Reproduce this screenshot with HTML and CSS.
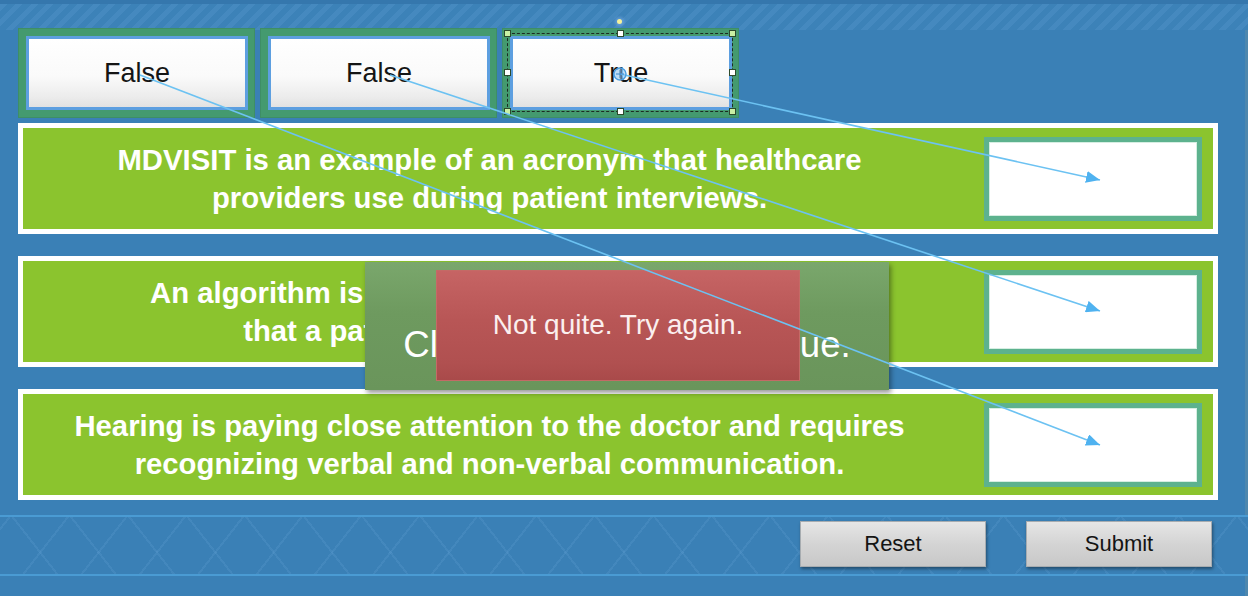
FILE: index.html
```html
<!DOCTYPE html>
<html lang="en">
<head>
<meta charset="utf-8">
<title>Drag and drop quiz</title>
<link rel="stylesheet" href="styles.css">
</head>
<body>
<div class="stage">
  <div class="tiles">
    <div class="tile"><div class="tile-face">False</div></div>
    <div class="tile"><div class="tile-face">False</div></div>
    <div class="tile tile-selected">
      <div class="tile-face">True</div>
      <div class="sel-box">
        <span class="handle h-tl corner"></span>
        <span class="handle h-tm"></span>
        <span class="handle h-tr corner"></span>
        <span class="handle h-ml"></span>
        <span class="handle h-mr"></span>
        <span class="handle h-bl corner"></span>
        <span class="handle h-bm"></span>
        <span class="handle h-br corner"></span>
      </div>
      <span class="rotate-dot"></span>
    </div>
  </div>

  <div class="rows">
    <div class="row">
      <p class="stmt">MDVISIT is an example of an acronym that healthcare<br>providers use during patient interviews.</p>
      <div class="drop"></div>
    </div>
    <div class="row">
      <p class="stmt">An algorithm is written guidance for all the steps<br>that a patient should follow closely.</p>
      <div class="drop"></div>
    </div>
    <div class="row">
      <p class="stmt">Hearing is paying close attention to the doctor and requires<br>recognizing verbal and non-verbal communication.</p>
      <div class="drop"></div>
    </div>
  </div>

  <div class="footer">
    <button class="btn" type="button">Reset</button>
    <button class="btn" type="button">Submit</button>
  </div>

  <div class="feedback">Click anywhere to continue.</div>
  <div class="toast">Not quite. Try again.</div>

  <svg class="wires" width="1248" height="596" viewBox="0 0 1248 596">
    <defs>
      <marker id="arrow" markerUnits="userSpaceOnUse" markerWidth="16" markerHeight="12" refX="14" refY="6" orient="auto">
        <path d="M0,0 L14,6 L0,12 Z" fill="#4fb2f0"/>
      </marker>
    </defs>
    <g fill="none" stroke="#6cc2f2" stroke-width="1.6">
      <line x1="140" y1="75" x2="1100" y2="445" marker-end="url(#arrow)"/>
      <line x1="390" y1="75" x2="1100" y2="311" marker-end="url(#arrow)"/>
      <line x1="620" y1="74" x2="1100" y2="180" marker-end="url(#arrow)"/>
    </g>
    <circle cx="620" cy="74" r="6" fill="rgba(140,195,240,0.55)" stroke="#4a9ee0" stroke-width="1.4"/>
    <path d="M616,74 H624 M620,70 V78" stroke="#3a88cc" stroke-width="1"/>
  </svg>
</div>
</body>
</html>
```
FILE: styles.css
```css
* { box-sizing: border-box; }

html, body {
  margin: 0;
  padding: 0;
  background: #3a80b6;
}

.stage {
  position: relative;
  width: 1248px;
  height: 596px;
  overflow: hidden;
  font-family: "Liberation Sans", Arial, sans-serif;
  background:
    repeating-linear-gradient(135deg, #4589bf 0 5px, #3c82b8 5px 11px) 0 4px / 100% 26px no-repeat,
    linear-gradient(#3577ad, #3577ad) 0 0 / 100% 4px no-repeat,
    linear-gradient(#4d87ae, #4d87ae) right 0 top 0 / 3px 100% no-repeat,
    #3a80b6;
}

/* draggable answer tiles */
.tiles {
  display: flex;
  gap: 5px;
  padding: 28px 0 0 18px;
}

.tile {
  position: relative;
  width: 237px;
  height: 90px;
  padding: 8px 7px 8px 8px;
  background: #449a6f;
  box-shadow: inset 0 0 0 1px #3e8e66;
}

.tile-face {
  height: 100%;
  display: flex;
  align-items: center;
  justify-content: center;
  border: 3px solid #5d9fe0;
  background: linear-gradient(#ffffff 0%, #fafafa 55%, #ececec 85%, #e2e2e2 100%);
  font-size: 27px;
  color: #151515;
}

.sel-box {
  position: absolute;
  left: 5px;
  top: 5px;
  width: 226px;
  height: 79px;
  border: 1px dashed #1d2a22;
}

.handle {
  position: absolute;
  width: 7px;
  height: 7px;
  background: #ffffff;
  border: 1px solid #2c4a2c;
}
.handle.corner { background: #c9f0a4; }
.h-tl { left: -4px; top: -4px; }
.h-tm { left: 109px; top: -4px; }
.h-tr { right: -4px; top: -4px; }
.h-ml { left: -4px; top: 35px; }
.h-mr { right: -4px; top: 35px; }
.h-bl { left: -4px; bottom: -4px; }
.h-bm { left: 109px; bottom: -4px; }
.h-br { right: -4px; bottom: -4px; }

.rotate-dot {
  position: absolute;
  left: 115px;
  top: -9px;
  width: 5px;
  height: 5px;
  border-radius: 50%;
  background: #f4f29a;
  box-shadow: 0 0 3px 2px rgba(120, 170, 230, 0.6);
}

/* statement rows */
.rows {
  display: flex;
  flex-direction: column;
  gap: 22px;
  margin: 5px 30px 0 18px;
}

.row {
  height: 111px;
  display: flex;
  align-items: center;
  border: 5px solid #ffffff;
  background: #8bc42e;
}

.stmt {
  flex: 1;
  margin: 0;
  padding-right: 28px;
  text-align: center;
  font-family: "Liberation Sans Narrow", "Liberation Sans", Arial, sans-serif;
  font-weight: bold;
  font-size: 29.3px;
  line-height: 38px;
  color: #ffffff;
}

.drop {
  width: 218px;
  height: 84px;
  margin-right: 11px;
  border: 5px solid #5db28e;
  background: #ffffff;
  box-shadow: inset 0 0 0 1px #d6eee2;
}

/* footer with buttons */
.footer {
  margin-top: 15px;
  height: 61px;
  display: flex;
  justify-content: flex-end;
  align-items: flex-start;
  gap: 40px;
  padding: 4px 36px 0 0;
  border-top: 2px solid #4a9bd3;
  border-bottom: 2px solid #4a9bd3;
  background:
    repeating-linear-gradient(52deg, transparent 0 44px, rgba(110, 170, 220, 0.18) 44px 46px),
    repeating-linear-gradient(-52deg, transparent 0 44px, rgba(110, 170, 220, 0.18) 44px 46px),
    #3a80b6;
}

.btn {
  width: 186px;
  height: 46px;
  padding: 0;
  border: 1px solid #a7acb0;
  background: linear-gradient(#e6e6e6, #d4d4d4 50%, #c8c8c8);
  box-shadow: 1px 2px 3px rgba(0, 0, 0, 0.4);
  font-family: "Liberation Sans", Arial, sans-serif;
  font-size: 22px;
  color: #141414;
}

/* overlays */
.feedback {
  position: absolute;
  left: 365px;
  top: 262px;
  width: 524px;
  height: 128px;
  padding-top: 63px;
  text-align: center;
  background: linear-gradient(#7aa76c, #6e9a5f 40%, #6a955b);
  box-shadow: 2px 3px 5px rgba(0, 0, 0, 0.4);
  font-size: 36.6px;
  line-height: 40px;
  color: #ffffff;
}

.toast {
  position: absolute;
  left: 436px;
  top: 270px;
  width: 364px;
  height: 111px;
  display: flex;
  align-items: center;
  justify-content: center;
  padding-bottom: 2px;
  background: linear-gradient(#c66464, #b85656 45%, #b05050 85%, #a94a4a);
  border: 1px solid #c46a66;
  font-size: 28px;
  color: #fbefef;
}

.wires {
  position: absolute;
  left: 0;
  top: 0;
  pointer-events: none;
}
```
